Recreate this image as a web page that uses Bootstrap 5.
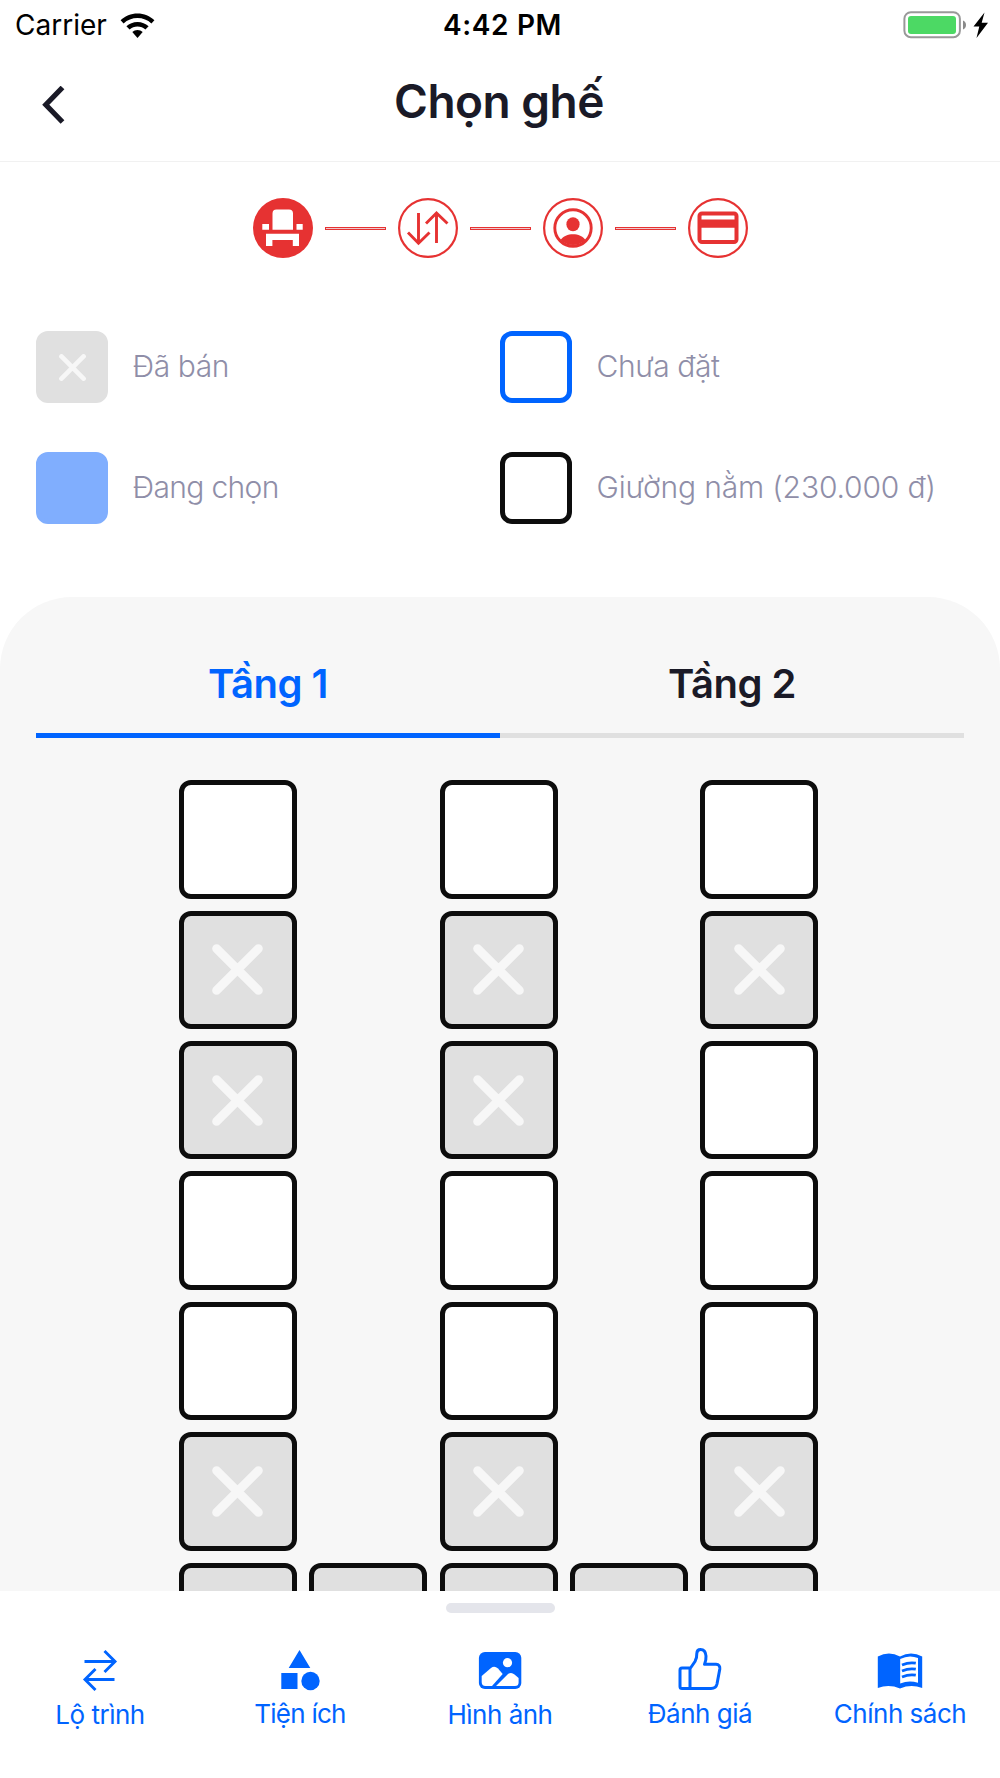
<!DOCTYPE html>
<html lang="vi">
<head>
<meta charset="utf-8">
<meta name="viewport" content="width=device-width, initial-scale=1">
<title>Chọn ghế</title>
<link href="https://cdn.jsdelivr.net/npm/bootstrap@5.3.0/dist/css/bootstrap.min.css" rel="stylesheet">
<style>
  :root { --blue: #0064ff; --ink: #1a1a27; --red: #e63232; --muted-ink: #8f8ea8; --sold: #e0e0e0; --pane: #f7f7f7; }
  body { font-family: Inter, "Noto Sans", sans-serif; color: var(--ink); background: #fff; }
  .screen { width: 1000px; height: 1778px; }
  svg { display: block; flex: none; }

  .statusbar { height: 51px; padding: 0 10px 0 15px; color: #000; font-size: 28px; line-height: 51px; }
  .statusbar .side { flex: 1 1 0; height: 50px; }
  .clock { font-weight: 600; letter-spacing: .65px; }
  .wifi { margin-left: 13px; }

  .topbar { height: 111px; border-bottom: 1.5px solid #f1f1f1; padding: 0 42px; }
  .topbar .side { flex: 1 1 0; padding-bottom: 3px; }
  .topbar h1 { font-size: 46px; font-weight: 600; line-height: 60px; letter-spacing: -.5px; padding: 0 2px 10px 0; }

  .steps { height: 132px; gap: 12px; }
  .step-line { width: 61px; height: 3px; border: 1px solid var(--red); background: #eec9cc; }

  .legend { padding: 37px 36px 0; height: 303px; }
  .legend .col-6 { height: 121px; }
  .swatch { width: 72px; height: 72px; border-radius: 12px; border: 5px solid; margin-right: 24.5px; }
  .swatch-sold { background: var(--sold); border-color: var(--sold); }
  .swatch-free { border-color: var(--blue); }
  .swatch-picked { background: #80aefe; border-color: #80aefe; }
  .swatch-bed { border-color: #0d0d0d; }
  .legend-label { color: var(--muted-ink); font-size: 30px; font-weight: 300; line-height: 70px; letter-spacing: -.4px; white-space: nowrap; }
  .tight { letter-spacing: -.65px; }
  .loose { letter-spacing: -.15px; }

  .deck { background: var(--pane); border-radius: 72px 72px 0 0; min-height: 0; }
  .deck .nav { padding: 0 36px; }
  .deck .nav-link { height: 141px; padding: 57px 0 0; border-radius: 0; border-bottom: 5px solid var(--sold); color: var(--ink); font-size: 40px; font-weight: 600; line-height: 60px; letter-spacing: -.5px; }
  .deck .nav-link.active { color: var(--blue); border-color: var(--blue); }

  .seats { display: grid; grid-template-columns: repeat(5, 118px); grid-auto-rows: 118.4px; gap: 12px 12.4px; margin: 42.3px 0 0 178.8px; }
  .seat { border: 5px solid #0d0d0d; border-radius: 12px; background: #fff; }
  .seat.sold { background: var(--sold); }

  .dock { height: 187px; }
  .grip { width: 109px; height: 10px; border-radius: 5px; background: #e4e5eb; margin-top: 12px; }
  .dock a { flex: 1 1 0; color: var(--blue); font-size: 26px; line-height: 32px; letter-spacing: -.5px; text-decoration: none; }
  .dock svg { margin: 34px 0 8px; }
  .dock .raised svg { margin-bottom: 7px; }
  .dock .narrow { letter-spacing: -.75px; }
</style>
<script src="https://cdn.jsdelivr.net/npm/bootstrap@5.3.0/dist/js/bootstrap.bundle.min.js"></script>
</head>
<body>
<svg width="0" height="0" class="position-absolute">
  <symbol id="cross" viewBox="0 0 50 50"><path d="M4.5 4.5 45.500 45.500M45.500 4.500 4.500 45.500" stroke="#f7f7f7" stroke-width="8.600" stroke-linecap="round"/></symbol>
</svg>
<div class="screen d-flex flex-column overflow-hidden">

  <div class="statusbar d-flex align-items-center flex-shrink-0">
    <div class="side d-flex align-items-center">
      <span>Carrier</span>
      <svg class="wifi" width="35" height="26" viewBox="0 0 35 26">
        <path d="M17.500 .5C11 .5 5 3 .6 7.200L3.600 10.400C7.300 6.900 12.200 5 17.500 5S27.700 6.900 31.400 10.400L34.400 7.200C30 3 24 .5 17.500 .5Z"/>
        <path d="M17.500 8.900C13.200 8.900 9.300 10.500 6.400 13.200L9.600 16.500C11.700 14.600 14.500 13.500 17.500 13.500S23.300 14.600 25.400 16.500L28.600 13.200C25.700 10.500 21.800 8.900 17.500 8.900Z"/>
        <path d="M17.500 17C15.500 17 13.700 17.800 12.300 19.100L17.500 25L22.700 19.100C21.300 17.800 19.500 17 17.500 17Z"/>
      </svg>
    </div>
    <span class="clock">4:42 PM</span>
    <div class="side d-flex align-items-center justify-content-end">
      <svg width="87" height="31" viewBox="0 0 87 31">
        <rect x="1.400" y="2.200" width="55.500" height="25" rx="6.500" fill="#fff" stroke="#999" stroke-width="2"/>
        <rect x="5" y="6" width="48" height="18" rx="3" fill="#4cd964"/>
        <path d="M60 10.500C64 12 64 18 60 19.500Z" fill="#8a8a8a"/>
        <path d="M81.500 2.500 70.500 16.600H76.300L73.500 28 85 12.800H78.700Z"/>
      </svg>
    </div>
  </div>

  <header class="topbar d-flex align-items-center flex-shrink-0">
    <div class="side">
      <svg width="24" height="38" viewBox="0 0 24 38"><path d="M20.500 1.500 3.800 18.800 20.500 36" fill="none" stroke="#1a1a27" stroke-width="5.200"/></svg>
    </div>
    <h1 class="mb-0">Chọn ghế</h1>
    <div class="side"></div>
  </header>

  <div class="steps d-flex align-items-center justify-content-center flex-shrink-0">
    <svg width="60" height="60" viewBox="0 0 60 60">
      <circle cx="30" cy="30" r="30" fill="#e63232"/>
      <path d="M19.500 31.800V15.500a4 4 0 0 1 4-4H36a4 4 0 0 1 4 4V31.800ZM9.300 26H16v5.800H9.300ZM43.500 26h6.200v5.800h-6.200ZM13 35.800H46V48H39.800V42H19.400v6H13Z" fill="#fff"/>
    </svg>
    <span class="step-line"></span>
    <svg width="60" height="60" viewBox="0 0 60 60" fill="none" stroke="#e63232">
      <circle cx="30" cy="30" r="28.900" stroke-width="2.200"/>
      <path d="M20.500 15V45M10 34.500 20.500 45.200 31.500 34.500M38.500 45V15M28 25.500 38.500 15 49.500 25.500" stroke-width="2.900"/>
    </svg>
    <span class="step-line"></span>
    <svg width="60" height="60" viewBox="0 0 60 60">
      <g fill="none" stroke="#e63232"><circle cx="30" cy="30" r="28.900" stroke-width="2.200"/><circle cx="30" cy="30" r="18.200" stroke-width="2.900"/></g>
      <ellipse cx="30" cy="26.300" rx="6.600" ry="7" fill="#e63232"/>
      <path d="M17.500 42C20 38 25 36.200 30 36.200S40 38 42.500 42A18 18 0 0 1 17.500 42Z" fill="#e63232"/>
    </svg>
    <span class="step-line"></span>
    <svg width="60" height="60" viewBox="0 0 60 60">
      <circle cx="30" cy="30" r="28.900" fill="none" stroke="#e63232" stroke-width="2.200"/>
      <rect x="11.500" y="15.500" width="37" height="28.500" rx="2.500" fill="none" stroke="#e63232" stroke-width="4"/>
      <path d="M11 21.500H49v8.300H11Z" fill="#e63232"/>
    </svg>
  </div>

  <section class="legend flex-shrink-0">
    <div class="row g-0">
      <div class="col-6 d-flex align-items-start">
        <div class="swatch swatch-sold d-flex align-items-center justify-content-center"><svg width="27" height="27"><use href="#cross"/></svg></div>
        <span class="legend-label">Đã bán</span>
      </div>
      <div class="col-6 d-flex align-items-start"><div class="swatch swatch-free"></div><span class="legend-label">Chưa đặt</span></div>
      <div class="col-6 d-flex align-items-start"><div class="swatch swatch-picked"></div><span class="legend-label tight">Đang chọn</span></div>
      <div class="col-6 d-flex align-items-start"><div class="swatch swatch-bed"></div><span class="legend-label loose">Giường nằm (230.000 đ)</span></div>
    </div>
  </section>

  <main class="deck flex-grow-1 overflow-hidden">
    <ul class="nav nav-fill nav-justified">
      <li class="nav-item"><a class="nav-link active" href="#">Tầng 1</a></li>
      <li class="nav-item"><a class="nav-link" href="#">Tầng 2</a></li>
    </ul>
    <div class="seats" id="seats"></div>
  </main>

  <nav class="dock flex-shrink-0 d-flex flex-column bg-white">
    <div class="grip align-self-center"></div>
    <div class="d-flex">
      <a href="#" class="d-flex flex-column align-items-center">
        <svg width="44" height="44" viewBox="0 0 44 44" fill="none" stroke="#0064ff" stroke-width="2.900"><path d="M6.500 14.500H36.500M26.500 4 37 14.500 26.500 25M36.500 32.500H6.500M17.500 22 7 32.500 17.500 43"/></svg>
        <span>Lộ trình</span>
      </a>
      <a href="#" class="d-flex flex-column align-items-center narrow raised">
        <svg width="44" height="44" viewBox="0 0 44 44" fill="#0064ff"><path d="M21.500 3 32.300 21H10.700ZM3.300 26H19.500V42H3.300Z"/><circle cx="32.500" cy="34" r="9.200"/></svg>
        <span>Tiện ích</span>
      </a>
      <a href="#" class="d-flex flex-column align-items-center">
        <svg width="44" height="44" viewBox="0 0 44 44"><rect x=".9" y="5" width="42.400" height="37" rx="6" fill="#0064ff"/><g fill="#fff"><circle cx="29.500" cy="15.700" r="4.600"/><path d="M3.700 29 13 21Q16.500 18.500 20 21.500L24.700 27 14 39H7.500Q3.700 39 3.700 35Z"/><path d="M18 39 29.500 27.500Q33 24.500 36.500 27.500L40.600 31V35.500Q40.600 39 37 39Z"/></g></svg>
        <span>Hình ảnh</span>
      </a>
      <a href="#" class="d-flex flex-column align-items-center raised">
        <svg width="44" height="44" viewBox="0 0 44 44" fill="none" stroke="#0064ff" stroke-width="3" stroke-linejoin="round"><path d="M12.500 21 17 14.500Q19 11 18.800 6.500 19 2.500 22.500 2.500 27.500 2.500 28 9 28.300 13 26.500 17.300H38Q42.300 17.500 41.800 22L39 37Q38 41.500 33 41.500H4Q2 41.500 2 39.500V23Q2 21 4 21ZM12 21V41.500"/></svg>
        <span>Đánh giá</span>
      </a>
      <a href="#" class="d-flex flex-column align-items-center raised">
        <svg width="46" height="44" viewBox="0 0 46 44"><path d="M.8 9.500Q12 3.500 23 9.500 34 3.500 45.200 9.500V41Q34 37 23 41.500 12 37 .8 41Z" fill="#0064ff"/><path d="M23.200 12Q32 7.500 41 11V35.800Q32 32.800 23.200 36.500Z" fill="#fff"/><g fill="none" stroke="#0064ff" stroke-width="2.800"><path d="M25 18Q32 15 38.800 16.200M25 24Q32 21 38.800 22.200M25 30Q32 27 38.800 28.200"/></g></svg>
        <span>Chính sách</span>
      </a>
    </div>
  </nav>
</div>

<script>
  // "o" free seat, "x" sold seat, "." aisle
  const plan = ["o.o.o", "x.x.x", "x.x.o", "o.o.o", "o.o.o", "x.x.x", "xxxxx"];
  document.getElementById("seats").innerHTML = plan.join("").split("").map(c =>
    c === "." ? "<div></div>" :
    c === "o" ? '<div class="seat"></div>' :
    '<div class="seat sold d-flex align-items-center justify-content-center"><svg width="51" height="51"><use href="#cross"/></svg></div>'
  ).join("");
</script>
</body>
</html>
